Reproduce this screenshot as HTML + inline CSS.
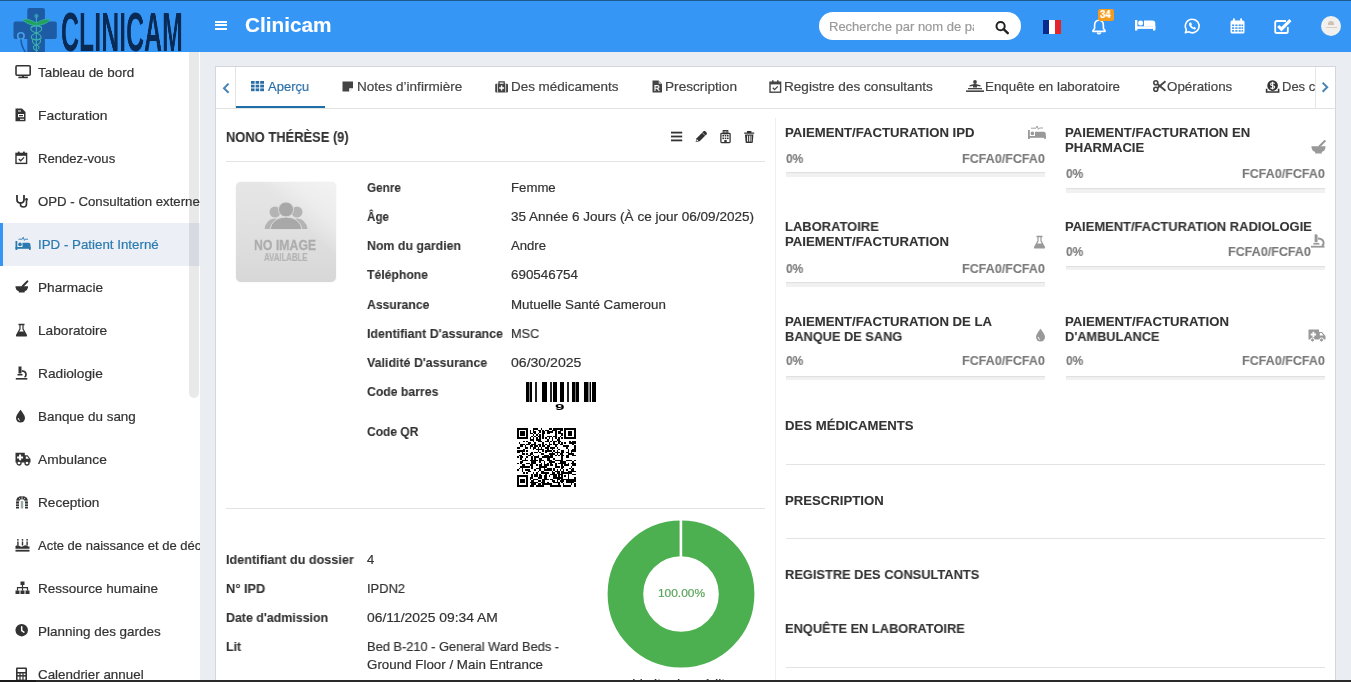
<!DOCTYPE html>
<html><head><meta charset="utf-8">
<style>
html,body{margin:0;padding:0;}
body{width:1351px;height:682px;overflow:hidden;position:relative;background:#eaeef3;font-family:"Liberation Sans",sans-serif;}
.a{position:absolute;}
.t{position:absolute;white-space:nowrap;line-height:1;transform-origin:0 0;will-change:transform;font-family:"Liberation Sans",sans-serif;}
svg{position:absolute;overflow:visible;}
</style></head><body>
<div class="a" style="left:0;top:0;width:1351px;height:52px;background:#3596f6"></div>
<div class="a" style="left:0;top:0;width:1351px;height:1.2px;background:#1f5a8f"></div>
<svg style="left:0;top:0" width="200" height="52" viewBox="0 0 200 52">
<rect x="27.3" y="7.9" width="17.6" height="46" rx="2" fill="#1d5ba5"/>
<rect x="13.5" y="21.6" width="43.3" height="17.3" rx="2" fill="#1d5ba5"/>
<path d="M36.4 14.5 V52" stroke="#3aa7b8" stroke-width="1.2"/>
<circle cx="36.4" cy="16" r="1.6" fill="none" stroke="#3aa7b8" stroke-width="1"/>
<path d="M22.5 19.5 Q29 18 36.4 23 Q44 18 50.5 19.5 Q46 25 36.4 25.5 Q27 25 22.5 19.5Z" fill="#1fa35a" stroke="#3ab0a8" stroke-width="0.8"/>
<path d="M31 27 Q36.4 24 41.5 27.5 Q43 31 36.4 33 Q30 35 31.5 38.5 Q36.4 41 40 39 Q42 43 36.4 45 Q32 46 34 49 Q36.4 51 38 50" fill="none" stroke="#3ab0a8" stroke-width="1.1"/>
<path d="M41.5 27 Q36.4 24 31 27.5 Q29.5 31 36.4 33 Q42 35 41 38.5 Q36.4 41 33 39 Q31 43 36.4 45 Q40 46 38.5 49" fill="none" stroke="#3ab0a8" stroke-width="1.1"/>
<circle cx="20.9" cy="36" r="3.2" fill="none" stroke="#48a0e6" stroke-width="1.6"/>
<path d="M20.9 39.2 Q21.5 47 25.5 52" fill="none" stroke="#1d5ba5" stroke-width="1.6"/>
</svg>
<div class="t" style="left:60.5px;top:5.2px;font-size:55.5px;font-weight:700;color:#082a55;transform:scaleX(0.449);letter-spacing:0px">CLINICAM</div>
<div class="a" style="left:215px;top:20.5px;width:11.5px;height:2.2px;background:#fff"></div>
<div class="a" style="left:215px;top:24.3px;width:11.5px;height:2.2px;background:#fff"></div>
<div class="a" style="left:215px;top:28.1px;width:11.5px;height:2.2px;background:#fff"></div>
<div class="a" style="left:819px;top:12px;width:202px;height:28px;border-radius:14px;background:#fff"></div>
<div class="a" style="left:975px;top:14px;width:30px;height:24px;background:#fff"></div>
<svg style="left:995px;top:21px" width="15" height="13" viewBox="0 0 15 13">
<circle cx="5.6" cy="5.2" r="4.1" fill="none" stroke="#222" stroke-width="2"/>
<path d="M8.6 8.2 L12.8 12.2" stroke="#222" stroke-width="2.4" stroke-linecap="round"/></svg>
<div class="a" style="left:1043px;top:20px;width:6px;height:14px;background:#0a2a8f"></div>
<div class="a" style="left:1049px;top:20px;width:6px;height:14px;background:#fff"></div>
<div class="a" style="left:1055px;top:20px;width:6px;height:14px;background:#e3242b"></div>
<svg style="left:1091px;top:18px" width="16" height="17" viewBox="0 0 16 17">
<path d="M8 2.2 C4.8 2.2 3.6 5 3.6 7.5 V10.6 L2 12.6 V13.4 H14 V12.6 L12.4 10.6 V7.5 C12.4 5 11.2 2.2 8 2.2Z" fill="none" stroke="#fff" stroke-width="1.6" stroke-linejoin="round"/>
<path d="M6.2 14.6 Q8 16.6 9.8 14.6" fill="none" stroke="#fff" stroke-width="1.6"/>
<rect x="7.2" y="0.6" width="1.6" height="2" fill="#fff"/></svg>
<div class="a" style="left:1098px;top:9px;width:16px;height:11.5px;border-radius:2px;background:#f29b1d"></div>
<div class="t" style="left:1099.5px;top:10px;font-size:10px;font-weight:700;color:#fff;-webkit-text-stroke:0.2px #fff;transform:scaleX(0.95)">34</div>
<svg style="left:1135px;top:18px" width="21" height="13" viewBox="0 0 21 13">
<rect x="0" y="2" width="2.4" height="10.5" fill="#fff"/>
<circle cx="5.6" cy="5" r="2.5" fill="#fff"/>
<path d="M9 2.6 H17.5 Q20.3 2.6 20.3 5.4 V8.6 H9Z" fill="#fff"/>
<rect x="0" y="8.3" width="20.3" height="2.6" fill="#fff"/>
<rect x="18" y="8" width="2.3" height="4.5" fill="#fff"/></svg>
<svg style="left:1184px;top:18px" width="17" height="16" viewBox="0 0 17 16">
<path d="M8.5 1.2 A6.8 6.8 0 1 1 4.8 13.8 L1.4 14.8 L2.4 11.6 A6.8 6.8 0 0 1 8.5 1.2Z" fill="none" stroke="#fff" stroke-width="1.6" stroke-linejoin="round"/>
<path d="M5.8 4.6 Q4.6 5.4 5.1 7.2 Q6.3 10.2 9.8 11.3 Q11.6 11.7 12 10.2 L10.5 8.7 L9.4 9.4 Q7.9 8.6 7.3 7.3 L8 6.2 L7 4.5 Z" fill="#fff"/></svg>
<svg style="left:1230px;top:18px" width="15" height="16" viewBox="0 0 15 16">
<rect x="0.5" y="2.5" width="14" height="13" rx="1.5" fill="#fff"/>
<rect x="3" y="0.3" width="1.8" height="3.5" rx="0.6" fill="#fff"/><rect x="10.2" y="0.3" width="1.8" height="3.5" rx="0.6" fill="#fff"/>
<g fill="#3d9af5">
<rect x="2" y="6.5" width="2.2" height="1.6"/><rect x="5.3" y="6.5" width="2.2" height="1.6"/><rect x="8.6" y="6.5" width="2.2" height="1.6"/><rect x="11.5" y="6.5" width="1.6" height="1.6"/>
<rect x="2" y="9.3" width="2.2" height="1.6"/><rect x="5.3" y="9.3" width="2.2" height="1.6"/><rect x="8.6" y="9.3" width="2.2" height="1.6"/><rect x="11.5" y="9.3" width="1.6" height="1.6"/>
<rect x="2" y="12.1" width="2.2" height="1.6"/><rect x="5.3" y="12.1" width="2.2" height="1.6"/><rect x="8.6" y="12.1" width="2.2" height="1.6"/><rect x="11.5" y="12.1" width="1.6" height="1.6"/>
</g></svg>
<svg style="left:1274px;top:18px" width="18" height="16" viewBox="0 0 18 16">
<path d="M12 3 H3 Q1.2 3 1.2 4.8 V13.4 Q1.2 15 3 15 H12 Q13.8 15 13.8 13.4 V9" fill="none" stroke="#fff" stroke-width="1.8"/>
<path d="M4.2 8 L7.4 11.2 L16.4 2.2" fill="none" stroke="#fff" stroke-width="3.1"/></svg>
<div class="a" style="left:1321px;top:16px;width:20px;height:20px;border-radius:50%;background:#f2f0ee"></div>
<div class="a" style="left:1328px;top:20.5px;width:6px;height:4.5px;background:#cfc2b4;border-radius:3px 3px 0 0"></div>
<div class="a" style="left:1325.5px;top:26.5px;width:11px;height:1.2px;background:#dccfc2"></div>
<div class="a" style="left:0;top:52px;width:200px;height:630px;background:#fff"></div>
<div class="a" style="left:0;top:223px;width:200px;height:43px;background:#eceff6"></div>
<div class="a" style="left:0;top:223px;width:3px;height:43px;background:#3596f6"></div>
<div class="a" style="left:189px;top:52px;width:10px;height:346px;background:rgba(0,0,0,0.085);border-radius:0 0 5px 5px"></div>
<svg style="left:14.5px;top:64.5px" width="16" height="14" viewBox="0 0 16 14"><rect x="1" y="0.8" width="14.2" height="9.5" rx="1" fill="none" stroke="#333" stroke-width="1.6"/><rect x="7" y="10.2" width="2" height="2" fill="#333"/><rect x="3.4" y="11.6" width="9.5" height="1.6" fill="#333"/></svg>
<svg style="left:14.5px;top:107.5px" width="12" height="14" viewBox="0 0 12 14"><path d="M0.5 0.5 H7 L10.5 4 V13.3 H0.5Z" fill="#333"/><rect x="3" y="6" width="6" height="3.2" fill="#fff"/><rect x="4" y="7" width="4" height="1.2" fill="#333"/><rect x="3" y="2.5" width="3" height="1" fill="#fff"/><rect x="5" y="10.8" width="4" height="1" fill="#fff"/></svg>
<svg style="left:14.5px;top:150.5px" width="14" height="14" viewBox="0 0 14 14"><rect x="1" y="2.4" width="10.6" height="10" fill="none" stroke="#333" stroke-width="1.4"/><rect x="1" y="2.4" width="10.6" height="2.4" fill="#333"/><rect x="2.8" y="0.6" width="1.8" height="3" fill="#333"/><rect x="8" y="0.6" width="1.8" height="3" fill="#333"/><path d="M3.8 8 L5.7 9.8 L9 6.4" fill="none" stroke="#333" stroke-width="1.3"/></svg>
<svg style="left:14.5px;top:193.5px" width="14" height="14" viewBox="0 0 14 14"><path d="M2 1 V5.5 Q2 9 5.5 9 Q9 9 9 5.5 V1" fill="none" stroke="#333" stroke-width="1.8"/><path d="M5.5 9 V10.5 Q5.5 13 8.5 13 Q11.5 13 11.5 10 V6.5" fill="none" stroke="#333" stroke-width="1.6"/><circle cx="11.5" cy="5.5" r="1.4" fill="#333"/></svg>
<svg style="left:14.5px;top:236.0px" width="16" height="15" viewBox="0 0 16 15"><rect x="0.5" y="5" width="1.8" height="9" fill="#2b7bb0"/><circle cx="5" cy="8.4" r="1.8" fill="#2b7bb0"/><path d="M7.5 6.8 H13.5 Q15.5 6.8 15.5 9 V11.5 H7.5Z" fill="#2b7bb0"/><rect x="0.5" y="11" width="15" height="1.8" fill="#2b7bb0"/><rect x="14" y="11" width="1.6" height="3" fill="#2b7bb0"/><path d="M3.5 3.2 H7.2 L8.3 1.2 L9.4 4.4 L10.4 3.2 H13" fill="none" stroke="#2b7bb0" stroke-width="0.9"/></svg>
<svg style="left:14.5px;top:279.5px" width="14" height="14" viewBox="0 0 14 14"><path d="M0.5 6.2 H13 V7.5 Q12.6 10.6 9.6 11.6 V12.6 H3.9 V11.6 Q0.9 10.6 0.5 7.5Z" fill="#333"/><path d="M7.6 6.3 L12.4 1.4" stroke="#333" stroke-width="2" stroke-linecap="round"/></svg>
<svg style="left:14.5px;top:322.5px" width="13" height="14" viewBox="0 0 13 14"><path d="M3.5 0.8 H9.5 V2.2 H8.6 V5.8 L12 12 Q12.6 13.5 11 13.5 H2 Q0.4 13.5 1 12 L4.4 5.8 V2.2 H3.5Z" fill="#333"/><path d="M5.6 2.2 V6.2 L4.2 8.6 H8.8 L7.4 6.2 V2.2Z" fill="#fff"/></svg>
<svg style="left:14.5px;top:365.5px" width="13" height="14" viewBox="0 0 13 14"><path d="M3.5 0.5 H6.5 V7.5 H3.5Z" fill="#333"/><path d="M6.8 4.8 Q11 5 11 8.8 Q11 10.6 9.5 11" fill="none" stroke="#333" stroke-width="1.7"/><rect x="2.5" y="8" width="5" height="1.5" fill="#333"/><rect x="0.8" y="12" width="11.5" height="1.6" fill="#333"/></svg>
<svg style="left:14.5px;top:408.5px" width="11" height="14" viewBox="0 0 11 14"><path d="M5.5 0.8 Q10 6.5 10 9 A4.5 4.5 0 0 1 1 9 Q1 6.5 5.5 0.8Z" fill="#333"/><path d="M3.2 9 Q3.2 11 5 11.5" fill="none" stroke="#fff" stroke-width="0.9"/></svg>
<svg style="left:14.5px;top:451.5px" width="16" height="14" viewBox="0 0 16 14"><path d="M0.5 0.8 H9.8 V3.2 H12.6 L15.5 7 V10.6 H0.5Z" fill="#333"/><path d="M10.8 4.4 H12.2 L14 6.8 H10.8Z" fill="#fff"/><path d="M4.1 2.6 H6.1 V4.6 H8.1 V6.6 H6.1 V8.6 H4.1 V6.6 H2.1 V4.6 H4.1Z" fill="#fff"/><circle cx="4" cy="11" r="2" fill="#fff" stroke="#333" stroke-width="1.3"/><circle cx="12" cy="11" r="2" fill="#fff" stroke="#333" stroke-width="1.3"/></svg>
<svg style="left:14.5px;top:494.5px" width="14" height="14" viewBox="0 0 14 14"><path d="M1 13.5 V7 Q1 1 7 1 Q13 1 13 7 V13.5 H10 V7.2 Q10 4.2 7 4.2 Q4 4.2 4 7.2 V13.5Z" fill="#333"/><path d="M1 6 H4 M1 9 H4 M1 11.5 H4 M10 6 H13 M10 9 H13 M10 11.5 H13 M4 2.8 L5 4.4 M10 2.8 L9 4.4 M7 1 V4.2" stroke="#fff" stroke-width="0.7"/><rect x="5.8" y="6" width="2.4" height="7.5" fill="#9aa"/></svg>
<svg style="left:14.5px;top:537.5px" width="15" height="14" viewBox="0 0 15 14"><path d="M0.5 8 Q2.5 6.5 4.5 8 Q6.5 9.5 8.5 8 Q10.5 6.5 12.5 8 Q13.8 9 14.5 8.2 V10.8 H0.5Z" fill="#333"/><rect x="0.5" y="11.8" width="14" height="1.8" fill="#333"/><rect x="2.2" y="3.5" width="1.4" height="4" fill="#333"/><rect x="6.8" y="3.5" width="1.4" height="4" fill="#333"/><rect x="11.4" y="3.5" width="1.4" height="4" fill="#333"/><circle cx="2.9" cy="1.8" r="0.9" fill="#333"/><circle cx="7.5" cy="1.8" r="0.9" fill="#333"/><circle cx="12.1" cy="1.8" r="0.9" fill="#333"/></svg>
<svg style="left:14.5px;top:580.5px" width="15" height="14" viewBox="0 0 15 14"><rect x="5.5" y="0.5" width="4" height="3.5" fill="#333"/><rect x="0.5" y="9.5" width="4" height="3.5" fill="#333"/><rect x="5.5" y="9.5" width="4" height="3.5" fill="#333"/><rect x="10.5" y="9.5" width="4" height="3.5" fill="#333"/><path d="M7.5 4 V9.5 M2.5 9.5 V6.6 H12.5 V9.5" fill="none" stroke="#333" stroke-width="1.2"/></svg>
<svg style="left:14.5px;top:623.5px" width="14" height="14" viewBox="0 0 14 14"><circle cx="6.7" cy="6.2" r="6.2" fill="#333"/><path d="M6.7 2.8 V6.6 L8.9 8.1" fill="none" stroke="#fff" stroke-width="1.5" stroke-linecap="round"/></svg>
<svg style="left:14.5px;top:666.5px" width="13" height="14" viewBox="0 0 13 14"><rect x="1" y="0.5" width="11" height="13" rx="1" fill="#333"/><rect x="2.6" y="2" width="7.8" height="3" fill="#fff"/><g fill="#fff"><rect x="2.6" y="6.5" width="1.8" height="1.6"/><rect x="5.6" y="6.5" width="1.8" height="1.6"/><rect x="8.6" y="6.5" width="1.8" height="1.6"/><rect x="2.6" y="9.6" width="1.8" height="3"/><rect x="5.6" y="9.6" width="1.8" height="3"/><rect x="8.6" y="9.6" width="1.8" height="3"/></g></svg>
<div class="a" style="left:215px;top:66px;width:1119px;height:630px;background:#fff;border:1px solid #d3d7dd"></div>
<div class="a" style="left:216px;top:108px;width:1119px;height:1px;background:#e3e3e3"></div>
<div class="a" style="left:235px;top:67px;width:1px;height:41px;background:#e3e3e3"></div>
<div class="a" style="left:1315px;top:67px;width:1px;height:41px;background:#e6e6e6"></div>
<div class="a" style="left:236px;top:105.7px;width:89px;height:2.6px;background:#1f6ea8"></div>
<svg style="left:221px;top:82px" width="10" height="12" viewBox="0 0 10 12"><path d="M7.6 1.6 L3 6.2 L7.6 10.8" fill="none" stroke="#4a84b5" stroke-width="2"/></svg>
<svg style="left:1320px;top:81px" width="10" height="12" viewBox="0 0 10 12"><path d="M2.6 1.6 L7.2 6.2 L2.6 10.8" fill="none" stroke="#4a84b5" stroke-width="2"/></svg>
<svg style="left:251px;top:80.8px" width="14" height="10.5" viewBox="0 0 14 10.5"><g fill="#2a6ea6"><rect x="0" y="0" width="3.6" height="2.8"/><rect x="4.6" y="0" width="3.6" height="2.8"/><rect x="9.2" y="0" width="3.8" height="2.8"/><rect x="0" y="3.7" width="3.6" height="2.8"/><rect x="4.6" y="3.7" width="3.6" height="2.8"/><rect x="9.2" y="3.7" width="3.8" height="2.8"/><rect x="0" y="7.4" width="3.6" height="2.8"/><rect x="4.6" y="7.4" width="3.6" height="2.8"/><rect x="9.2" y="7.4" width="3.8" height="2.8"/></g></svg>
<svg style="left:341.5px;top:80.5px" width="12" height="11" viewBox="0 0 12 11"><path d="M0.5 0.5 H11 V7 L7 10.5 H0.5Z" fill="#444"/><path d="M7.2 10.5 V7.2 H11" fill="#fff"/></svg>
<svg style="left:495px;top:80.5px" width="14" height="12" viewBox="0 0 14 12"><rect x="0.2" y="2.8" width="12.8" height="8.6" rx="1" fill="#444"/><path d="M4 2.9 V0.8 H9.2 V2.9" fill="none" stroke="#444" stroke-width="1.3"/><rect x="2.1" y="2.8" width="0.9" height="8.6" fill="#fff" opacity="0.8"/><rect x="10.2" y="2.8" width="0.9" height="8.6" fill="#fff" opacity="0.8"/><path d="M5.9 4.6 H7.3 V6.3 H9 V7.7 H7.3 V9.4 H5.9 V7.7 H4.2 V6.3 H5.9Z" fill="#fff"/></svg>
<svg style="left:651.5px;top:79.5px" width="11" height="13" viewBox="0 0 11 13"><path d="M0.5 0.5 H6.6 L10 4 V12.5 H0.5Z" fill="#444"/><path d="M6.6 0.5 V4 H10" fill="#fff" opacity="0.6"/><path d="M3 11 V5.6 H5.4 Q7 5.6 7 7 Q7 8.3 5.4 8.3 H3 M5.2 8.3 L7.4 11" fill="none" stroke="#fff" stroke-width="1.1"/></svg>
<svg style="left:769px;top:79.5px" width="13" height="13" viewBox="0 0 13 13"><rect x="1" y="2.2" width="10.6" height="10" fill="none" stroke="#444" stroke-width="1.4"/><rect x="1" y="2.2" width="10.6" height="2.2" fill="#444"/><rect x="3" y="0.3" width="1.6" height="2.6" fill="#444"/><rect x="8" y="0.3" width="1.6" height="2.6" fill="#444"/><path d="M3.8 7.8 L5.6 9.6 L8.8 6.4" fill="none" stroke="#444" stroke-width="1.3"/></svg>
<svg style="left:965.5px;top:80px" width="18" height="12" viewBox="0 0 18 12"><circle cx="9" cy="2" r="1.9" fill="#444"/><path d="M3.5 5.2 L9 3.8 L14.5 5.2 V6.6 L11 6 V7.5 H7 V6 L3.5 6.6Z" fill="#444"/><path d="M2 8 H16 V9.3 H2Z" fill="#444"/><rect x="0" y="10.4" width="18" height="1.6" fill="#444"/></svg>
<svg style="left:1152.5px;top:80px" width="13" height="12" viewBox="0 0 13 12"><circle cx="2.8" cy="2.8" r="2" fill="none" stroke="#444" stroke-width="1.6"/><circle cx="2.8" cy="9.2" r="2" fill="none" stroke="#444" stroke-width="1.6"/><path d="M4.4 4 L12.5 10.8 M4.4 8 L12.5 1.2" stroke="#444" stroke-width="1.8"/></svg>
<svg style="left:1265.5px;top:79.5px" width="14" height="13" viewBox="0 0 14 13"><circle cx="6.6" cy="5.6" r="5.3" fill="#333"/><path d="M8.6 3.6 Q8 2.8 6.6 2.8 Q4.6 2.8 4.6 4.3 Q4.6 5.5 6.6 5.7 Q8.6 5.9 8.6 7.1 Q8.6 8.5 6.6 8.5 Q5.1 8.5 4.5 7.6 M6.6 1.8 V9.5" fill="none" stroke="#fff" stroke-width="1.1"/><path d="M0.6 8.8 V12 H12.6 V8.8" fill="none" stroke="#333" stroke-width="1.6"/></svg>
<div class="a" style="left:775px;top:118px;width:1px;height:564px;background:#eeeeee"></div>
<div class="a" style="left:226px;top:161px;width:539px;height:1px;background:#e3e3e3"></div>
<div class="a" style="left:226px;top:507.5px;width:539px;height:1px;background:#e3e3e3"></div>
<svg style="left:670px;top:130px" width="86" height="14" viewBox="0 0 86 14">
<g fill="#333"><rect x="1" y="1.7" width="11.2" height="1.8"/><rect x="1" y="5.6" width="11.2" height="1.8"/><rect x="1" y="9.5" width="11.2" height="1.8"/></g>
<path d="M25.6 12 L26.6 8.2 L33.6 1.2 Q34.4 0.5 35.2 1.2 L36.6 2.6 Q37.3 3.4 36.6 4.2 L29.6 11.2Z" fill="#333"/><path d="M26.3 11.3 L26.9 9.2 L28.4 10.7Z" fill="#fff"/><path d="M32.2 2.6 L35.2 5.6" stroke="#fff" stroke-width="0.6"/>
<rect x="50.9" y="3.4" width="9.2" height="9.2" rx="0.8" fill="none" stroke="#333" stroke-width="1.3"/><rect x="53.2" y="0.6" width="4.6" height="3.2" fill="none" stroke="#333" stroke-width="1.1"/><path d="M54.6 1.2 V3 M56.4 1.2 V3 M54.6 2.1 H56.4" stroke="#333" stroke-width="0.7"/>
<g fill="#333"><rect x="52.4" y="5" width="1.6" height="1.5"/><rect x="54.7" y="5" width="1.6" height="1.5"/><rect x="57" y="5" width="1.6" height="1.5"/><rect x="52.4" y="7.6" width="1.6" height="1.5"/><rect x="54.7" y="7.6" width="1.6" height="1.5"/><rect x="57" y="7.6" width="1.6" height="1.5"/><rect x="54.3" y="10" width="2.4" height="2.6"/></g>
<path d="M74.2 2.4 H84.2 V3.8 H74.2Z M77 1 H81.4 V2.4 H77Z M75 4.4 H83.4 L82.8 12.2 Q82.7 13 81.9 13 H76.5 Q75.7 13 75.6 12.2Z" fill="#333"/>
<g fill="#fff"><rect x="77" y="5.6" width="0.9" height="6"/><rect x="78.9" y="5.6" width="0.9" height="6"/><rect x="80.6" y="5.6" width="0.9" height="6"/></g>
</svg>
<div class="a" style="left:236px;top:182px;width:100px;height:100px;border-radius:5px;background:linear-gradient(180deg,#e6e6e6 0%,#e0e0e0 50%,#d7d7d7 100%);box-shadow:0 0 1px rgba(0,0,0,0.2);overflow:hidden"><div style="position:absolute;left:0;top:0;width:100px;height:100px;background:linear-gradient(225deg,rgba(255,255,255,0.5) 0%,rgba(255,255,255,0.35) 22%,rgba(255,255,255,0) 38%)"></div></div>
<svg style="left:264px;top:200px" width="44" height="30" viewBox="0 0 44 30">
<circle cx="11" cy="12" r="5.5" fill="#b4b4b4"/><circle cx="33" cy="12" r="5.5" fill="#b4b4b4"/>
<path d="M0.5 29 Q2 19 11 18.5 Q20 19 21.5 29Z" fill="#b4b4b4"/><path d="M22.5 29 Q24 19 33 18.5 Q42 19 43.5 29Z" fill="#b4b4b4"/>
<circle cx="22" cy="9.5" r="7.5" fill="#a8a8a8" stroke="#dcdcdc" stroke-width="1"/>
<path d="M6 29.5 Q8 17.5 22 17 Q36 17.5 38 29.5Z" fill="#a8a8a8" stroke="#dcdcdc" stroke-width="1"/></svg>
<div class="t" style="left:254px;top:237px;font-size:15px;font-weight:700;color:#acacac;-webkit-text-stroke:0.3px #acacac;transform:scaleX(0.82)">NO IMAGE</div>
<div class="t" style="left:264px;top:253.3px;font-size:10px;font-weight:700;color:#b4b4b4;-webkit-text-stroke:0.2px #b4b4b4;transform:scaleX(0.78)">AVAILABLE</div>
<div class="a" style="left:525.9px;top:382px;width:3.10px;height:19.5px;background:#000"></div>
<div class="a" style="left:529px;top:382px;width:1.30px;height:19.5px;background:#888"></div>
<div class="a" style="left:530.3px;top:382px;width:1.80px;height:19.5px;background:#000"></div>
<div class="a" style="left:534.9px;top:382px;width:1.90px;height:19.5px;background:#222"></div>
<div class="a" style="left:542.4px;top:382px;width:5.00px;height:19.5px;background:#000"></div>
<div class="a" style="left:550.2px;top:382px;width:1.50px;height:19.5px;background:#222"></div>
<div class="a" style="left:553px;top:382px;width:3.70px;height:19.5px;background:#000"></div>
<div class="a" style="left:559.5px;top:382px;width:4.70px;height:19.5px;background:#000"></div>
<div class="a" style="left:567px;top:382px;width:1.80px;height:19.5px;background:#222"></div>
<div class="a" style="left:571.6px;top:382px;width:3.10px;height:19.5px;background:#000"></div>
<div class="a" style="left:574.7px;top:382px;width:1.00px;height:19.5px;background:#777"></div>
<div class="a" style="left:576.3px;top:382px;width:2.80px;height:19.5px;background:#000"></div>
<div class="a" style="left:583.7px;top:382px;width:4.30px;height:19.5px;background:#000"></div>
<div class="a" style="left:588px;top:382px;width:1.70px;height:19.5px;background:#888"></div>
<div class="a" style="left:589.7px;top:382px;width:1.50px;height:19.5px;background:#000"></div>
<div class="a" style="left:592.4px;top:382px;width:3.40px;height:19.5px;background:#000"></div>
<div class="t" style="left:554.6px;top:402.2px;font-size:9.5px;font-weight:700;color:#000;transform:scaleX(1.8)">9</div>
<svg style="left:516.8px;top:427.9px" width="58.5" height="58.5" viewBox="0 0 37 37" shape-rendering="crispEdges"><g fill="#000"><rect x="0" y="0" width="7" height="1"/><rect x="10" y="0" width="3" height="1"/><rect x="15" y="0" width="1" height="1"/><rect x="20" y="0" width="2" height="1"/><rect x="23" y="0" width="6" height="1"/><rect x="30" y="0" width="7" height="1"/><rect x="0" y="1" width="1" height="1"/><rect x="6" y="1" width="1" height="1"/><rect x="8" y="1" width="1" height="1"/><rect x="10" y="1" width="1" height="1"/><rect x="13" y="1" width="2" height="1"/><rect x="16" y="1" width="1" height="1"/><rect x="18" y="1" width="2" height="1"/><rect x="22" y="1" width="3" height="1"/><rect x="27" y="1" width="2" height="1"/><rect x="30" y="1" width="1" height="1"/><rect x="36" y="1" width="1" height="1"/><rect x="0" y="2" width="1" height="1"/><rect x="2" y="2" width="3" height="1"/><rect x="6" y="2" width="1" height="1"/><rect x="8" y="2" width="1" height="1"/><rect x="10" y="2" width="2" height="1"/><rect x="14" y="2" width="1" height="1"/><rect x="16" y="2" width="2" height="1"/><rect x="19" y="2" width="4" height="1"/><rect x="24" y="2" width="1" height="1"/><rect x="26" y="2" width="2" height="1"/><rect x="30" y="2" width="1" height="1"/><rect x="32" y="2" width="3" height="1"/><rect x="36" y="2" width="1" height="1"/><rect x="0" y="3" width="1" height="1"/><rect x="2" y="3" width="3" height="1"/><rect x="6" y="3" width="1" height="1"/><rect x="8" y="3" width="2" height="1"/><rect x="11" y="3" width="1" height="1"/><rect x="13" y="3" width="1" height="1"/><rect x="16" y="3" width="2" height="1"/><rect x="19" y="3" width="2" height="1"/><rect x="24" y="3" width="1" height="1"/><rect x="26" y="3" width="3" height="1"/><rect x="30" y="3" width="1" height="1"/><rect x="32" y="3" width="3" height="1"/><rect x="36" y="3" width="1" height="1"/><rect x="0" y="4" width="1" height="1"/><rect x="2" y="4" width="3" height="1"/><rect x="6" y="4" width="1" height="1"/><rect x="10" y="4" width="1" height="1"/><rect x="12" y="4" width="1" height="1"/><rect x="14" y="4" width="1" height="1"/><rect x="16" y="4" width="1" height="1"/><rect x="24" y="4" width="1" height="1"/><rect x="28" y="4" width="1" height="1"/><rect x="30" y="4" width="1" height="1"/><rect x="32" y="4" width="3" height="1"/><rect x="36" y="4" width="1" height="1"/><rect x="0" y="5" width="1" height="1"/><rect x="6" y="5" width="1" height="1"/><rect x="9" y="5" width="1" height="1"/><rect x="11" y="5" width="1" height="1"/><rect x="13" y="5" width="2" height="1"/><rect x="16" y="5" width="1" height="1"/><rect x="19" y="5" width="3" height="1"/><rect x="23" y="5" width="2" height="1"/><rect x="27" y="5" width="1" height="1"/><rect x="30" y="5" width="1" height="1"/><rect x="36" y="5" width="1" height="1"/><rect x="0" y="6" width="7" height="1"/><rect x="8" y="6" width="1" height="1"/><rect x="10" y="6" width="1" height="1"/><rect x="12" y="6" width="1" height="1"/><rect x="14" y="6" width="1" height="1"/><rect x="16" y="6" width="1" height="1"/><rect x="18" y="6" width="1" height="1"/><rect x="20" y="6" width="1" height="1"/><rect x="22" y="6" width="1" height="1"/><rect x="24" y="6" width="1" height="1"/><rect x="26" y="6" width="1" height="1"/><rect x="28" y="6" width="1" height="1"/><rect x="30" y="6" width="7" height="1"/><rect x="8" y="7" width="3" height="1"/><rect x="12" y="7" width="3" height="1"/><rect x="19" y="7" width="1" height="1"/><rect x="22" y="7" width="1" height="1"/><rect x="25" y="7" width="2" height="1"/><rect x="4" y="8" width="1" height="1"/><rect x="6" y="8" width="1" height="1"/><rect x="10" y="8" width="1" height="1"/><rect x="13" y="8" width="3" height="1"/><rect x="18" y="8" width="2" height="1"/><rect x="21" y="8" width="1" height="1"/><rect x="23" y="8" width="2" height="1"/><rect x="26" y="8" width="2" height="1"/><rect x="33" y="8" width="1" height="1"/><rect x="35" y="8" width="2" height="1"/><rect x="1" y="9" width="1" height="1"/><rect x="7" y="9" width="2" height="1"/><rect x="11" y="9" width="1" height="1"/><rect x="16" y="9" width="1" height="1"/><rect x="20" y="9" width="1" height="1"/><rect x="23" y="9" width="1" height="1"/><rect x="26" y="9" width="1" height="1"/><rect x="28" y="9" width="1" height="1"/><rect x="30" y="9" width="1" height="1"/><rect x="33" y="9" width="4" height="1"/><rect x="2" y="10" width="3" height="1"/><rect x="6" y="10" width="2" height="1"/><rect x="9" y="10" width="3" height="1"/><rect x="13" y="10" width="2" height="1"/><rect x="16" y="10" width="1" height="1"/><rect x="18" y="10" width="1" height="1"/><rect x="20" y="10" width="2" height="1"/><rect x="23" y="10" width="3" height="1"/><rect x="27" y="10" width="2" height="1"/><rect x="35" y="10" width="1" height="1"/><rect x="2" y="11" width="2" height="1"/><rect x="5" y="11" width="1" height="1"/><rect x="8" y="11" width="2" height="1"/><rect x="11" y="11" width="2" height="1"/><rect x="14" y="11" width="1" height="1"/><rect x="16" y="11" width="2" height="1"/><rect x="19" y="11" width="2" height="1"/><rect x="24" y="11" width="1" height="1"/><rect x="29" y="11" width="4" height="1"/><rect x="36" y="11" width="1" height="1"/><rect x="0" y="12" width="2" height="1"/><rect x="5" y="12" width="2" height="1"/><rect x="8" y="12" width="1" height="1"/><rect x="10" y="12" width="2" height="1"/><rect x="13" y="12" width="1" height="1"/><rect x="15" y="12" width="1" height="1"/><rect x="18" y="12" width="2" height="1"/><rect x="21" y="12" width="3" height="1"/><rect x="25" y="12" width="1" height="1"/><rect x="31" y="12" width="1" height="1"/><rect x="36" y="12" width="1" height="1"/><rect x="4" y="13" width="1" height="1"/><rect x="10" y="13" width="1" height="1"/><rect x="12" y="13" width="5" height="1"/><rect x="19" y="13" width="1" height="1"/><rect x="22" y="13" width="1" height="1"/><rect x="26" y="13" width="1" height="1"/><rect x="32" y="13" width="1" height="1"/><rect x="35" y="13" width="2" height="1"/><rect x="0" y="14" width="5" height="1"/><rect x="6" y="14" width="1" height="1"/><rect x="13" y="14" width="1" height="1"/><rect x="16" y="14" width="1" height="1"/><rect x="18" y="14" width="4" height="1"/><rect x="23" y="14" width="1" height="1"/><rect x="25" y="14" width="1" height="1"/><rect x="28" y="14" width="2" height="1"/><rect x="32" y="14" width="1" height="1"/><rect x="34" y="14" width="3" height="1"/><rect x="0" y="15" width="2" height="1"/><rect x="3" y="15" width="1" height="1"/><rect x="9" y="15" width="1" height="1"/><rect x="11" y="15" width="2" height="1"/><rect x="14" y="15" width="1" height="1"/><rect x="18" y="15" width="1" height="1"/><rect x="22" y="15" width="1" height="1"/><rect x="24" y="15" width="3" height="1"/><rect x="28" y="15" width="2" height="1"/><rect x="31" y="15" width="2" height="1"/><rect x="34" y="15" width="1" height="1"/><rect x="3" y="16" width="2" height="1"/><rect x="6" y="16" width="1" height="1"/><rect x="8" y="16" width="2" height="1"/><rect x="15" y="16" width="2" height="1"/><rect x="20" y="16" width="4" height="1"/><rect x="25" y="16" width="1" height="1"/><rect x="27" y="16" width="2" height="1"/><rect x="32" y="16" width="4" height="1"/><rect x="1" y="17" width="2" height="1"/><rect x="7" y="17" width="2" height="1"/><rect x="10" y="17" width="1" height="1"/><rect x="13" y="17" width="1" height="1"/><rect x="17" y="17" width="3" height="1"/><rect x="21" y="17" width="2" height="1"/><rect x="24" y="17" width="1" height="1"/><rect x="26" y="17" width="1" height="1"/><rect x="28" y="17" width="2" height="1"/><rect x="31" y="17" width="2" height="1"/><rect x="35" y="17" width="2" height="1"/><rect x="0" y="18" width="1" height="1"/><rect x="2" y="18" width="2" height="1"/><rect x="6" y="18" width="1" height="1"/><rect x="9" y="18" width="1" height="1"/><rect x="11" y="18" width="3" height="1"/><rect x="16" y="18" width="7" height="1"/><rect x="28" y="18" width="1" height="1"/><rect x="31" y="18" width="2" height="1"/><rect x="2" y="19" width="1" height="1"/><rect x="5" y="19" width="1" height="1"/><rect x="9" y="19" width="1" height="1"/><rect x="11" y="19" width="1" height="1"/><rect x="14" y="19" width="2" height="1"/><rect x="19" y="19" width="2" height="1"/><rect x="23" y="19" width="1" height="1"/><rect x="28" y="19" width="1" height="1"/><rect x="3" y="20" width="4" height="1"/><rect x="8" y="20" width="5" height="1"/><rect x="14" y="20" width="3" height="1"/><rect x="19" y="20" width="3" height="1"/><rect x="24" y="20" width="5" height="1"/><rect x="31" y="20" width="4" height="1"/><rect x="36" y="20" width="1" height="1"/><rect x="2" y="21" width="2" height="1"/><rect x="9" y="21" width="3" height="1"/><rect x="14" y="21" width="1" height="1"/><rect x="17" y="21" width="1" height="1"/><rect x="20" y="21" width="4" height="1"/><rect x="27" y="21" width="4" height="1"/><rect x="35" y="21" width="1" height="1"/><rect x="0" y="22" width="1" height="1"/><rect x="2" y="22" width="1" height="1"/><rect x="6" y="22" width="2" height="1"/><rect x="9" y="22" width="3" height="1"/><rect x="15" y="22" width="1" height="1"/><rect x="17" y="22" width="1" height="1"/><rect x="19" y="22" width="1" height="1"/><rect x="21" y="22" width="1" height="1"/><rect x="24" y="22" width="1" height="1"/><rect x="26" y="22" width="5" height="1"/><rect x="32" y="22" width="1" height="1"/><rect x="34" y="22" width="3" height="1"/><rect x="3" y="23" width="2" height="1"/><rect x="8" y="23" width="2" height="1"/><rect x="12" y="23" width="1" height="1"/><rect x="14" y="23" width="2" height="1"/><rect x="17" y="23" width="3" height="1"/><rect x="21" y="23" width="2" height="1"/><rect x="24" y="23" width="1" height="1"/><rect x="28" y="23" width="1" height="1"/><rect x="30" y="23" width="3" height="1"/><rect x="35" y="23" width="2" height="1"/><rect x="2" y="24" width="6" height="1"/><rect x="9" y="24" width="1" height="1"/><rect x="14" y="24" width="5" height="1"/><rect x="24" y="24" width="3" height="1"/><rect x="28" y="24" width="2" height="1"/><rect x="34" y="24" width="1" height="1"/><rect x="1" y="25" width="1" height="1"/><rect x="3" y="25" width="1" height="1"/><rect x="9" y="25" width="1" height="1"/><rect x="12" y="25" width="3" height="1"/><rect x="17" y="25" width="1" height="1"/><rect x="19" y="25" width="3" height="1"/><rect x="23" y="25" width="1" height="1"/><rect x="28" y="25" width="1" height="1"/><rect x="33" y="25" width="1" height="1"/><rect x="35" y="25" width="1" height="1"/><rect x="0" y="26" width="1" height="1"/><rect x="3" y="26" width="1" height="1"/><rect x="5" y="26" width="3" height="1"/><rect x="11" y="26" width="1" height="1"/><rect x="14" y="26" width="1" height="1"/><rect x="17" y="26" width="5" height="1"/><rect x="23" y="26" width="1" height="1"/><rect x="25" y="26" width="1" height="1"/><rect x="27" y="26" width="1" height="1"/><rect x="29" y="26" width="1" height="1"/><rect x="31" y="26" width="1" height="1"/><rect x="34" y="26" width="2" height="1"/><rect x="3" y="27" width="1" height="1"/><rect x="7" y="27" width="2" height="1"/><rect x="13" y="27" width="1" height="1"/><rect x="15" y="27" width="2" height="1"/><rect x="22" y="27" width="1" height="1"/><rect x="24" y="27" width="3" height="1"/><rect x="28" y="27" width="2" height="1"/><rect x="32" y="27" width="5" height="1"/><rect x="4" y="28" width="1" height="1"/><rect x="6" y="28" width="1" height="1"/><rect x="10" y="28" width="1" height="1"/><rect x="12" y="28" width="1" height="1"/><rect x="15" y="28" width="5" height="1"/><rect x="22" y="28" width="2" height="1"/><rect x="25" y="28" width="2" height="1"/><rect x="28" y="28" width="7" height="1"/><rect x="9" y="29" width="1" height="1"/><rect x="11" y="29" width="2" height="1"/><rect x="14" y="29" width="1" height="1"/><rect x="18" y="29" width="1" height="1"/><rect x="21" y="29" width="4" height="1"/><rect x="26" y="29" width="3" height="1"/><rect x="32" y="29" width="1" height="1"/><rect x="35" y="29" width="2" height="1"/><rect x="0" y="30" width="7" height="1"/><rect x="9" y="30" width="1" height="1"/><rect x="11" y="30" width="2" height="1"/><rect x="14" y="30" width="2" height="1"/><rect x="17" y="30" width="2" height="1"/><rect x="20" y="30" width="1" height="1"/><rect x="23" y="30" width="2" height="1"/><rect x="26" y="30" width="1" height="1"/><rect x="28" y="30" width="1" height="1"/><rect x="30" y="30" width="1" height="1"/><rect x="32" y="30" width="1" height="1"/><rect x="0" y="31" width="1" height="1"/><rect x="6" y="31" width="1" height="1"/><rect x="8" y="31" width="2" height="1"/><rect x="13" y="31" width="3" height="1"/><rect x="17" y="31" width="2" height="1"/><rect x="23" y="31" width="6" height="1"/><rect x="32" y="31" width="1" height="1"/><rect x="36" y="31" width="1" height="1"/><rect x="0" y="32" width="1" height="1"/><rect x="2" y="32" width="3" height="1"/><rect x="6" y="32" width="1" height="1"/><rect x="8" y="32" width="1" height="1"/><rect x="10" y="32" width="3" height="1"/><rect x="16" y="32" width="4" height="1"/><rect x="21" y="32" width="2" height="1"/><rect x="25" y="32" width="2" height="1"/><rect x="28" y="32" width="9" height="1"/><rect x="0" y="33" width="1" height="1"/><rect x="2" y="33" width="3" height="1"/><rect x="6" y="33" width="1" height="1"/><rect x="9" y="33" width="2" height="1"/><rect x="13" y="33" width="2" height="1"/><rect x="16" y="33" width="2" height="1"/><rect x="22" y="33" width="2" height="1"/><rect x="25" y="33" width="1" height="1"/><rect x="27" y="33" width="3" height="1"/><rect x="31" y="33" width="6" height="1"/><rect x="0" y="34" width="1" height="1"/><rect x="2" y="34" width="3" height="1"/><rect x="6" y="34" width="1" height="1"/><rect x="8" y="34" width="5" height="1"/><rect x="15" y="34" width="3" height="1"/><rect x="19" y="34" width="1" height="1"/><rect x="23" y="34" width="4" height="1"/><rect x="28" y="34" width="1" height="1"/><rect x="31" y="34" width="5" height="1"/><rect x="0" y="35" width="1" height="1"/><rect x="6" y="35" width="1" height="1"/><rect x="9" y="35" width="3" height="1"/><rect x="13" y="35" width="2" height="1"/><rect x="16" y="35" width="6" height="1"/><rect x="26" y="35" width="1" height="1"/><rect x="29" y="35" width="1" height="1"/><rect x="34" y="35" width="1" height="1"/><rect x="36" y="35" width="1" height="1"/><rect x="0" y="36" width="7" height="1"/><rect x="8" y="36" width="3" height="1"/><rect x="12" y="36" width="5" height="1"/><rect x="21" y="36" width="7" height="1"/><rect x="29" y="36" width="5" height="1"/><rect x="36" y="36" width="1" height="1"/></g></svg>
<svg style="left:607px;top:519.5px" width="148" height="148" viewBox="0 0 148 148">
<circle cx="74" cy="74" r="55.6" fill="none" stroke="#4caf50" stroke-width="35.6"/>
<rect x="72.6" y="0" width="2.6" height="37" fill="#fff"/></svg>
<div class="a" style="left:786px;top:172px;width:259px;height:4.5px;background:#f1f1f1;box-shadow:inset 0 1px 1px rgba(0,0,0,0.08)"></div>
<div class="a" style="left:1066px;top:188px;width:259px;height:4.5px;background:#f1f1f1;box-shadow:inset 0 1px 1px rgba(0,0,0,0.08)"></div>
<div class="a" style="left:786px;top:282px;width:259px;height:4.5px;background:#f1f1f1;box-shadow:inset 0 1px 1px rgba(0,0,0,0.08)"></div>
<div class="a" style="left:1066px;top:265.8px;width:259px;height:4.5px;background:#f1f1f1;box-shadow:inset 0 1px 1px rgba(0,0,0,0.08)"></div>
<div class="a" style="left:786px;top:375.5px;width:259px;height:4.5px;background:#f1f1f1;box-shadow:inset 0 1px 1px rgba(0,0,0,0.08)"></div>
<div class="a" style="left:1066px;top:375.5px;width:259px;height:4.5px;background:#f1f1f1;box-shadow:inset 0 1px 1px rgba(0,0,0,0.08)"></div>
<svg style="left:1027.5px;top:124.5px" width="18" height="14" viewBox="0 0 18 14">
<rect x="0" y="5" width="1.8" height="9" fill="#999"/><circle cx="4.4" cy="8.4" r="1.8" fill="#999"/><path d="M7 6.8 H15.5 Q17.8 6.8 17.8 9 V11.5 H7Z" fill="#999"/><rect x="0" y="11" width="17.8" height="1.8" fill="#999"/><rect x="16.2" y="11" width="1.6" height="3" fill="#999"/><path d="M3 3.2 H8 L9.2 1 L10.4 4.4 L11.5 3 H15" fill="none" stroke="#999" stroke-width="0.9"/></svg>
<svg style="left:1310.5px;top:139.5px" width="15" height="14" viewBox="0 0 15 14"><path d="M0.5 6.2 H14.5 V7.5 Q14 11 10.8 12 V13.5 H4.2 V12 Q1 11 0.5 7.5Z" fill="#999"/><path d="M8.5 6.3 L13.8 1" stroke="#999" stroke-width="2" stroke-linecap="round"/></svg>
<svg style="left:1032.5px;top:234.5px" width="13" height="14" viewBox="0 0 13 14"><path d="M3.5 0.8 H9.5 V2.2 H8.6 V5.8 L12 12 Q12.6 13.5 11 13.5 H2 Q0.4 13.5 1 12 L4.4 5.8 V2.2 H3.5Z" fill="#999"/><path d="M5.6 2.2 V6.2 L4.2 8.6 H8.8 L7.4 6.2 V2.2Z" fill="#fff"/></svg>
<svg style="left:1311.4px;top:234.2px" width="14" height="14" viewBox="0 0 14 14"><path d="M4 0.3 Q5.6 0 6.6 1 V8.2 H3.6 V1 Q3.6 0.5 4 0.3Z" fill="#999"/><path d="M7 4.4 Q12.6 4.6 12.6 9 Q12.6 11.2 10.8 11.6" fill="none" stroke="#999" stroke-width="2"/><rect x="2.4" y="9" width="6" height="1.6" fill="#999"/><rect x="0" y="11.8" width="13.5" height="1.8" fill="#999"/></svg>
<svg style="left:1035px;top:327.5px" width="11" height="14" viewBox="0 0 11 14"><path d="M5.5 0.8 Q10 6.5 10 9 A4.5 4.5 0 0 1 1 9 Q1 6.5 5.5 0.8Z" fill="#999"/><path d="M3.2 9 Q3.2 11 5 11.5" fill="none" stroke="#fff" stroke-width="0.9"/></svg>
<svg style="left:1307.5px;top:328px" width="18" height="14" viewBox="0 0 18 14"><path d="M0.5 1.5 H11 V4 H14 L17.5 8 V11.5 H0.5Z" fill="#999"/><path d="M11.8 5 H13.5 L15.6 7.6 H11.8Z" fill="#fff"/><path d="M4.5 3.8 H6.3 V5.6 H8.1 V7.4 H6.3 V9.2 H4.5 V7.4 H2.7 V5.6 H4.5Z" fill="#fff"/><circle cx="4.5" cy="12" r="2" fill="#999" stroke="#fff" stroke-width="1"/><circle cx="13.5" cy="12" r="2" fill="#999" stroke="#fff" stroke-width="1"/></svg>
<div class="a" style="left:786px;top:464px;width:539px;height:1px;background:#e3e3e3"></div>
<div class="a" style="left:786px;top:538px;width:539px;height:1px;background:#e3e3e3"></div>
<div class="a" style="left:786px;top:666.5px;width:539px;height:1px;background:#e3e3e3"></div>
<div class='t' style='left:244.70px;top:14.77px;font-size:20px;font-weight:700;color:#fff;-webkit-text-stroke:0.1px #fff;transform:scaleX(1.0377);'>Clinicam</div>
<div class='t' style='left:828.70px;top:20.00px;font-size:13px;font-weight:400;color:#9a9a9a;-webkit-text-stroke:0.2px #9a9a9a;'>Recherche par nom de pa</div>
<div class='t' style='left:38.40px;top:66.00px;font-size:13px;font-weight:400;color:#333;-webkit-text-stroke:0.2px #333;transform:scaleX(1.0306);'>Tableau de bord</div>
<div class='t' style='left:38.40px;top:109.00px;font-size:13px;font-weight:400;color:#333;-webkit-text-stroke:0.2px #333;transform:scaleX(1.0685);'>Facturation</div>
<div class='t' style='left:38.40px;top:152.00px;font-size:13px;font-weight:400;color:#333;-webkit-text-stroke:0.2px #333;transform:scaleX(1.0077);'>Rendez-vous</div>
<div class='t' style='left:38.40px;top:195.00px;font-size:13px;font-weight:400;color:#333;-webkit-text-stroke:0.2px #333;transform:scaleX(1.0178);'>OPD - Consultation externe</div>
<div class='t' style='left:38.40px;top:238.00px;font-size:13px;font-weight:400;color:#2b7bb0;-webkit-text-stroke:0.2px #2b7bb0;transform:scaleX(1.0248);'>IPD - Patient Interné</div>
<div class='t' style='left:38.40px;top:281.00px;font-size:13px;font-weight:400;color:#333;-webkit-text-stroke:0.2px #333;transform:scaleX(1.0460);'>Pharmacie</div>
<div class='t' style='left:38.40px;top:324.00px;font-size:13px;font-weight:400;color:#333;-webkit-text-stroke:0.2px #333;transform:scaleX(1.0520);'>Laboratoire</div>
<div class='t' style='left:38.40px;top:367.00px;font-size:13px;font-weight:400;color:#333;-webkit-text-stroke:0.2px #333;transform:scaleX(1.0547);'>Radiologie</div>
<div class='t' style='left:38.40px;top:410.00px;font-size:13px;font-weight:400;color:#333;-webkit-text-stroke:0.2px #333;transform:scaleX(1.0327);'>Banque du sang</div>
<div class='t' style='left:38.40px;top:453.00px;font-size:13px;font-weight:400;color:#333;-webkit-text-stroke:0.2px #333;transform:scaleX(1.0577);'>Ambulance</div>
<div class='t' style='left:38.40px;top:496.00px;font-size:13px;font-weight:400;color:#333;-webkit-text-stroke:0.2px #333;transform:scaleX(1.0470);'>Reception</div>
<div class='t' style='left:38.40px;top:539.00px;font-size:13px;font-weight:400;color:#333;-webkit-text-stroke:0.2px #333;'>Acte de naissance et de décès</div>
<div class='t' style='left:38.40px;top:582.00px;font-size:13px;font-weight:400;color:#333;-webkit-text-stroke:0.2px #333;transform:scaleX(1.0387);'>Ressource humaine</div>
<div class='t' style='left:38.40px;top:625.00px;font-size:13px;font-weight:400;color:#333;-webkit-text-stroke:0.2px #333;transform:scaleX(1.0360);'>Planning des gardes</div>
<div class='t' style='left:38.40px;top:668.00px;font-size:13px;font-weight:400;color:#333;-webkit-text-stroke:0.2px #333;transform:scaleX(1.0290);'>Calendrier annuel</div>
<div class='t' style='left:267.50px;top:79.80px;font-size:13px;font-weight:400;color:#2a6ea6;-webkit-text-stroke:0.2px #2a6ea6;transform:scaleX(0.9951);'>Aperçu</div>
<div class='t' style='left:356.80px;top:79.80px;font-size:13px;font-weight:400;color:#444;-webkit-text-stroke:0.2px #444;transform:scaleX(1.0400);'>Notes d’infirmière</div>
<div class='t' style='left:511.20px;top:79.80px;font-size:13px;font-weight:400;color:#444;-webkit-text-stroke:0.2px #444;transform:scaleX(1.0332);'>Des médicaments</div>
<div class='t' style='left:665.20px;top:79.80px;font-size:13px;font-weight:400;color:#444;-webkit-text-stroke:0.2px #444;transform:scaleX(1.0489);'>Prescription</div>
<div class='t' style='left:784.20px;top:79.80px;font-size:13px;font-weight:400;color:#444;-webkit-text-stroke:0.2px #444;transform:scaleX(1.0452);'>Registre des consultants</div>
<div class='t' style='left:985.20px;top:79.80px;font-size:13px;font-weight:400;color:#444;-webkit-text-stroke:0.2px #444;transform:scaleX(1.0263);'>Enquête en laboratoire</div>
<div class='t' style='left:1167.20px;top:79.80px;font-size:13px;font-weight:400;color:#444;-webkit-text-stroke:0.2px #444;transform:scaleX(1.0268);'>Opérations</div>
<div class='t' style='left:1281.90px;top:79.80px;font-size:13px;font-weight:400;color:#444;-webkit-text-stroke:0.2px #444;'>Des consultations</div>
<div class='t' style='left:226.00px;top:129.95px;font-size:14px;font-weight:700;color:#333;-webkit-text-stroke:0.1px #333;transform:scaleX(0.9224);'>NONO THÉRÈSE (9)</div>
<div class='t' style='left:366.50px;top:180.60px;font-size:13px;font-weight:700;color:#333;-webkit-text-stroke:0.1px #333;transform:scaleX(0.9048);'>Genre</div>
<div class='t' style='left:510.50px;top:180.60px;font-size:13px;font-weight:400;color:#333;-webkit-text-stroke:0.2px #333;transform:scaleX(1.0145);'>Femme</div>
<div class='t' style='left:366.50px;top:209.60px;font-size:13px;font-weight:700;color:#333;-webkit-text-stroke:0.1px #333;transform:scaleX(0.8957);'>Âge</div>
<div class='t' style='left:510.50px;top:209.60px;font-size:13px;font-weight:400;color:#333;-webkit-text-stroke:0.2px #333;transform:scaleX(1.0410);'>35 Année 6 Jours (À ce jour 06/09/2025)</div>
<div class='t' style='left:366.50px;top:238.90px;font-size:13px;font-weight:700;color:#333;-webkit-text-stroke:0.1px #333;transform:scaleX(0.9499);'>Nom du gardien</div>
<div class='t' style='left:510.50px;top:238.90px;font-size:13px;font-weight:400;color:#333;-webkit-text-stroke:0.2px #333;transform:scaleX(1.0086);'>Andre</div>
<div class='t' style='left:366.50px;top:268.00px;font-size:13px;font-weight:700;color:#333;-webkit-text-stroke:0.1px #333;transform:scaleX(0.9382);'>Téléphone</div>
<div class='t' style='left:510.50px;top:268.00px;font-size:13px;font-weight:400;color:#333;-webkit-text-stroke:0.2px #333;transform:scaleX(1.0295);'>690546754</div>
<div class='t' style='left:366.50px;top:297.60px;font-size:13px;font-weight:700;color:#333;-webkit-text-stroke:0.1px #333;transform:scaleX(0.9386);'>Assurance</div>
<div class='t' style='left:510.50px;top:297.60px;font-size:13px;font-weight:400;color:#333;-webkit-text-stroke:0.2px #333;transform:scaleX(1.0250);'>Mutuelle Santé Cameroun</div>
<div class='t' style='left:366.50px;top:327.00px;font-size:13px;font-weight:700;color:#333;-webkit-text-stroke:0.1px #333;transform:scaleX(0.9542);'>Identifiant D'assurance</div>
<div class='t' style='left:510.50px;top:327.00px;font-size:13px;font-weight:400;color:#333;-webkit-text-stroke:0.2px #333;transform:scaleX(0.9796);'>MSC</div>
<div class='t' style='left:366.50px;top:356.00px;font-size:13px;font-weight:700;color:#333;-webkit-text-stroke:0.1px #333;transform:scaleX(0.9544);'>Validité D'assurance</div>
<div class='t' style='left:510.50px;top:356.00px;font-size:13px;font-weight:400;color:#333;-webkit-text-stroke:0.2px #333;transform:scaleX(1.0818);'>06/30/2025</div>
<div class='t' style='left:366.50px;top:384.60px;font-size:13px;font-weight:700;color:#333;-webkit-text-stroke:0.1px #333;transform:scaleX(0.9397);'>Code barres</div>
<div class='t' style='left:366.50px;top:424.60px;font-size:13px;font-weight:700;color:#333;-webkit-text-stroke:0.1px #333;transform:scaleX(0.9240);'>Code QR</div>
<div class='t' style='left:226.10px;top:553.10px;font-size:13px;font-weight:700;color:#333;-webkit-text-stroke:0.1px #333;transform:scaleX(0.9721);'>Identifiant du dossier</div>
<div class='t' style='left:366.60px;top:553.10px;font-size:13px;font-weight:400;color:#333;-webkit-text-stroke:0.2px #333;'>4</div>
<div class='t' style='left:226.10px;top:582.00px;font-size:13px;font-weight:700;color:#333;-webkit-text-stroke:0.1px #333;transform:scaleX(0.9831);'>N° IPD</div>
<div class='t' style='left:366.60px;top:582.00px;font-size:13px;font-weight:400;color:#333;-webkit-text-stroke:0.2px #333;transform:scaleX(0.9922);'>IPDN2</div>
<div class='t' style='left:226.10px;top:610.70px;font-size:13px;font-weight:700;color:#333;-webkit-text-stroke:0.1px #333;transform:scaleX(0.9531);'>Date d'admission</div>
<div class='t' style='left:366.60px;top:610.70px;font-size:13px;font-weight:400;color:#333;-webkit-text-stroke:0.2px #333;transform:scaleX(1.0665);'>06/11/2025 09:34 AM</div>
<div class='t' style='left:226.10px;top:639.50px;font-size:13px;font-weight:700;color:#333;-webkit-text-stroke:0.1px #333;transform:scaleX(0.9502);'>Lit</div>
<div class='t' style='left:366.60px;top:639.50px;font-size:13px;font-weight:400;color:#333;-webkit-text-stroke:0.2px #333;transform:scaleX(0.9866);'>Bed B-210 - General Ward Beds -</div>
<div class='t' style='left:366.60px;top:658.20px;font-size:13px;font-weight:400;color:#333;-webkit-text-stroke:0.2px #333;transform:scaleX(1.0277);'>Ground Floor / Main Entrance</div>
<div class='t' style='left:657.70px;top:587.69px;font-size:11px;font-weight:400;color:#5aa55a;-webkit-text-stroke:0.2px #5aa55a;transform:scaleX(1.0820);'>100.00%</div>
<div class='t' style='left:632.20px;top:676.50px;font-size:13px;font-weight:400;color:#333;-webkit-text-stroke:0.2px #333;transform:scaleX(1.0549);'>Limite de crédit</div>
<div class='t' style='left:785.20px;top:126.40px;font-size:13px;font-weight:700;color:#333;-webkit-text-stroke:0.1px #333;transform:scaleX(1.0118);'>PAIEMENT/FACTURATION IPD</div>
<div class='t' style='left:1065.20px;top:126.20px;font-size:13px;font-weight:700;color:#333;-webkit-text-stroke:0.1px #333;transform:scaleX(1.0082);'>PAIEMENT/FACTURATION EN</div>
<div class='t' style='left:1065.20px;top:141.20px;font-size:13px;font-weight:700;color:#333;-webkit-text-stroke:0.1px #333;transform:scaleX(1.0059);'>PHARMACIE</div>
<div class='t' style='left:785.20px;top:219.80px;font-size:13px;font-weight:700;color:#333;-webkit-text-stroke:0.1px #333;transform:scaleX(0.9964);'>LABORATOIRE</div>
<div class='t' style='left:785.20px;top:234.80px;font-size:13px;font-weight:700;color:#333;-webkit-text-stroke:0.1px #333;transform:scaleX(1.0120);'>PAIEMENT/FACTURATION</div>
<div class='t' style='left:1065.20px;top:219.80px;font-size:13px;font-weight:700;color:#333;-webkit-text-stroke:0.1px #333;transform:scaleX(0.9953);'>PAIEMENT/FACTURATION RADIOLOGIE</div>
<div class='t' style='left:785.20px;top:314.70px;font-size:13px;font-weight:700;color:#333;-webkit-text-stroke:0.1px #333;transform:scaleX(1.0120);'>PAIEMENT/FACTURATION DE LA</div>
<div class='t' style='left:785.20px;top:329.70px;font-size:13px;font-weight:700;color:#333;-webkit-text-stroke:0.1px #333;transform:scaleX(0.9842);'>BANQUE DE SANG</div>
<div class='t' style='left:1065.20px;top:314.70px;font-size:13px;font-weight:700;color:#333;-webkit-text-stroke:0.1px #333;transform:scaleX(1.0120);'>PAIEMENT/FACTURATION</div>
<div class='t' style='left:1065.20px;top:329.70px;font-size:13px;font-weight:700;color:#333;-webkit-text-stroke:0.1px #333;transform:scaleX(0.9818);'>D'AMBULANCE</div>
<div class='t' style='left:785.70px;top:151.60px;font-size:13px;font-weight:700;color:#7a7a7a;-webkit-text-stroke:0.1px #7a7a7a;transform:scaleX(0.9150);'>0%</div>
<div class='t' style='left:962.00px;top:151.60px;font-size:13px;font-weight:700;color:#7a7a7a;-webkit-text-stroke:0.1px #7a7a7a;transform:scaleX(0.9643);'>FCFA0/FCFA0</div>
<div class='t' style='left:1065.70px;top:167.20px;font-size:13px;font-weight:700;color:#7a7a7a;-webkit-text-stroke:0.1px #7a7a7a;transform:scaleX(0.9150);'>0%</div>
<div class='t' style='left:1242.20px;top:167.20px;font-size:13px;font-weight:700;color:#7a7a7a;-webkit-text-stroke:0.1px #7a7a7a;transform:scaleX(0.9643);'>FCFA0/FCFA0</div>
<div class='t' style='left:785.70px;top:261.60px;font-size:13px;font-weight:700;color:#7a7a7a;-webkit-text-stroke:0.1px #7a7a7a;transform:scaleX(0.9150);'>0%</div>
<div class='t' style='left:962.00px;top:261.60px;font-size:13px;font-weight:700;color:#7a7a7a;-webkit-text-stroke:0.1px #7a7a7a;transform:scaleX(0.9643);'>FCFA0/FCFA0</div>
<div class='t' style='left:1065.70px;top:245.40px;font-size:13px;font-weight:700;color:#7a7a7a;-webkit-text-stroke:0.1px #7a7a7a;transform:scaleX(0.9150);'>0%</div>
<div class='t' style='left:1228.00px;top:245.40px;font-size:13px;font-weight:700;color:#7a7a7a;-webkit-text-stroke:0.1px #7a7a7a;transform:scaleX(0.9643);'>FCFA0/FCFA0</div>
<div class='t' style='left:785.70px;top:354.30px;font-size:13px;font-weight:700;color:#7a7a7a;-webkit-text-stroke:0.1px #7a7a7a;transform:scaleX(0.9150);'>0%</div>
<div class='t' style='left:962.00px;top:354.30px;font-size:13px;font-weight:700;color:#7a7a7a;-webkit-text-stroke:0.1px #7a7a7a;transform:scaleX(0.9643);'>FCFA0/FCFA0</div>
<div class='t' style='left:1065.70px;top:354.30px;font-size:13px;font-weight:700;color:#7a7a7a;-webkit-text-stroke:0.1px #7a7a7a;transform:scaleX(0.9150);'>0%</div>
<div class='t' style='left:1242.20px;top:354.30px;font-size:13px;font-weight:700;color:#7a7a7a;-webkit-text-stroke:0.1px #7a7a7a;transform:scaleX(0.9643);'>FCFA0/FCFA0</div>
<div class='t' style='left:785.20px;top:418.80px;font-size:13px;font-weight:700;color:#333;-webkit-text-stroke:0.1px #333;transform:scaleX(1.0120);'>DES MÉDICAMENTS</div>
<div class='t' style='left:785.20px;top:494.00px;font-size:13px;font-weight:700;color:#333;-webkit-text-stroke:0.1px #333;transform:scaleX(1.0120);'>PRESCRIPTION</div>
<div class='t' style='left:785.20px;top:568.00px;font-size:13px;font-weight:700;color:#333;-webkit-text-stroke:0.1px #333;transform:scaleX(0.9878);'>REGISTRE DES CONSULTANTS</div>
<div class='t' style='left:785.20px;top:622.00px;font-size:13px;font-weight:700;color:#333;-webkit-text-stroke:0.1px #333;transform:scaleX(0.9865);'>ENQUÊTE EN LABORATOIRE</div>
<div class="a" style="left:1315.5px;top:67px;width:19.5px;height:41px;background:#fff"></div>
<div class="a" style="left:1315px;top:67px;width:1px;height:41px;background:#e6e6e6"></div>
<svg style="left:1320px;top:81px" width="10" height="12" viewBox="0 0 10 12"><path d="M2.6 1.6 L7.2 6.2 L2.6 10.8" fill="none" stroke="#4a84b5" stroke-width="2"/></svg>
<div class="a" style="left:200px;top:52px;width:15px;height:630px;background:#eaeef3"></div>
<div class="a" style="left:1336px;top:52px;width:15px;height:630px;background:#eaeef3"></div>
<div class="a" style="left:1335px;top:66px;width:1px;height:616px;background:#d3d7dd"></div>
<div class="a" style="left:974px;top:14px;width:18px;height:24px;background:#fff"></div>
<div class="a" style="left:0;top:679.6px;width:1351px;height:2.4px;background:#2a2a2a"></div>
<div class="a" style="left:0;top:679.6px;width:36px;height:2.4px;background:#1a1a1a"></div>
</body></html>
